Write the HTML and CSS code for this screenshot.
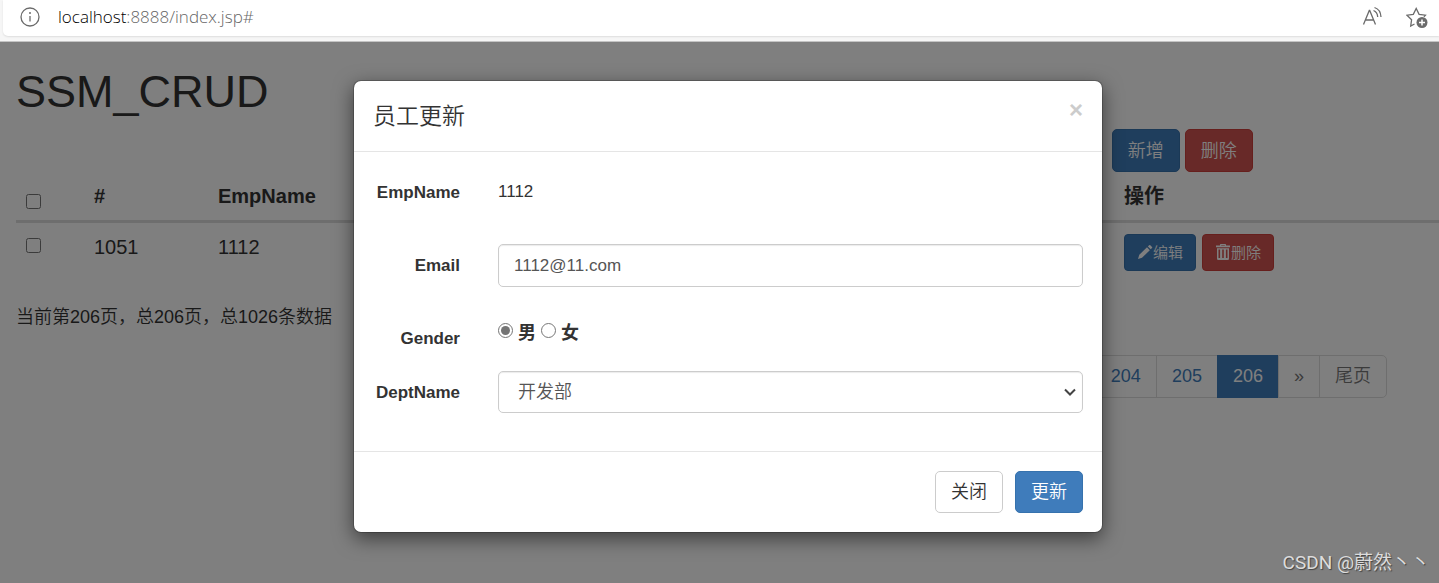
FILE: index.html
```html
<!DOCTYPE html>
<html lang="zh-CN">
<head>
  <meta charset="UTF-8">
  <title>员工列表</title>
  <link rel="stylesheet" href="styles.css">
</head>
<body>
  <header class="browser-bar">
    <div class="address">
      <svg class="icon-info" viewBox="0 0 20 20" width="20" height="20">
        <circle cx="10" cy="10" r="9" />
        <path d="M10 9v5.500" />
        <circle class="dot" cx="10" cy="6" r="1" />
      </svg>
      <span class="url"><span class="host">localhost</span>:8888/index.jsp#</span>
      <div class="tools">
        <svg viewBox="0 0 22 22" width="22" height="22">
          <path d="M1.500 18.500 7.300 4.500h.4l5.800 14M3.700 14h7.600" />
          <path d="M11.500 4.500c2.500 1 4 3.200 4.200 6.500M12.500 1.500c3.800 1.200 6.200 4.500 6.500 9.500" />
        </svg>
        <svg viewBox="0 0 22 22" width="22" height="22">
          <path d="M8.500 18 4.700 20l.9-6.300L1 9.200l6.300-.9L10.200 2.500l2.900 5.800 6.300.9-1.500 1.500" />
          <circle class="dot" cx="16" cy="16.500" r="5.500" />
          <path class="plus" d="M16 13.500v6M13 16.500h6" />
        </svg>
      </div>
    </div>
  </header>

  <div class="viewport">
    <main class="page">
      <h1>SSM_CRUD</h1>
      <div class="toolbar">
        <button type="button" class="btn btn-primary">新增</button>
        <button type="button" class="btn btn-danger">删除</button>
      </div>

      <table class="table">
        <thead>
          <tr>
            <th class="col-check"><input type="checkbox" aria-label="全选"></th>
            <th class="col-id">#</th>
            <th>EmpName</th>
            <th class="col-action">操作</th>
          </tr>
        </thead>
        <tbody>
          <tr>
            <td><input type="checkbox" aria-label="选择 1051"></td>
            <td>1051</td>
            <td>1112</td>
            <td>
              <div class="actions">
                <button type="button" class="btn btn-primary btn-sm">
                  <svg viewBox="0 0 16 18" width="16" height="18">
                    <path d="M1 15l1.300-4.200L10 3.300l2.800 2.900-7.800 7.600zM10.900 2.400l1.200-1.200q.6-.5 1.200 0l1.700 1.700q.5.600 0 1.200l-1.300 1.200z" />
                  </svg>编辑</button>
                <button type="button" class="btn btn-danger btn-sm">
                  <svg viewBox="0 0 16 18" width="16" height="18">
                    <path fill-rule="evenodd" d="M5 1.500V.7Q5 0 5.700 0h4.600q.7 0 .7.700v.8h4v1.700H1V1.500zM6.200 1.500h3.600V1.100H6.200zM2 4.200h12v10.600q0 1.200-1.200 1.200H3.200Q2 16 2 14.800zM3.500 5.500V14h1.600V5.500zM7.200 5.500V14h1.600V5.500zM10.900 5.500V14h1.600V5.500z" />
                  </svg>删除</button>
              </div>
            </td>
          </tr>
        </tbody>
      </table>

      <p class="page-info">当前第206页，总206页，总1026条数据</p>
      <nav class="pager">
        <ul class="pagination">
          <li><a href="#">204</a></li>
          <li><a href="#">205</a></li>
          <li class="active"><a href="#">206</a></li>
          <li class="disabled"><a href="#">»</a></li>
          <li class="disabled"><a href="#">尾页</a></li>
        </ul>
      </nav>
    </main>

    <div class="backdrop">
      <form class="modal" role="dialog" aria-labelledby="modalTitle">
        <div class="modal-header">
          <h4 id="modalTitle">员工更新</h4>
          <button type="button" class="close">×</button>
        </div>
        <div class="modal-body">
          <div class="form-group with-help">
            <span class="control-label">EmpName</span>
            <p class="form-static">1112</p>
          </div>
          <div class="form-group with-help">
            <label class="control-label" for="email">Email</label>
            <input type="text" class="form-control" id="email" value="1112@11.com">
          </div>
          <div class="form-group">
            <span class="control-label">Gender</span>
            <div class="radios">
              <label><input type="radio" name="gender" value="M" checked>男</label>
              <label><input type="radio" name="gender" value="F">女</label>
            </div>
          </div>
          <div class="form-group">
            <label class="control-label" for="dept">DeptName</label>
            <select class="form-control" id="dept">
              <option>开发部</option>
            </select>
          </div>
        </div>
        <div class="modal-footer">
          <button type="button" class="btn btn-default">关闭</button>
          <button type="submit" class="btn btn-primary">更新</button>
        </div>
      </form>
    </div>

    <div class="watermark">CSDN @蔚然丶丶</div>
  </div>
</body>
</html>
```
FILE: styles.css
```css
* { box-sizing: border-box; }
body {
  margin: 0;
  min-height: 100vh;
  display: flex;
  flex-direction: column;
  font-family: "Liberation Sans", "Noto Sans CJK SC", sans-serif;
  font-weight: 350;
  font-size: 18px;
  line-height: 26px;
  color: #333;
  background-color: #fff;
}
h1, h4, p, ul { margin: 0; padding: 0; font-weight: 350; }
button, input, select { font: inherit; margin: 0; }
input[type="checkbox"], input[type="radio"] {
  display: block;
  width: 15px;
  height: 15px;
  accent-color: #757575;
}

/* browser bar */
.browser-bar {
  height: 42px;
  padding-left: 3px;
  background-color: #f6f6f6;
  border-bottom: 1px solid #c4c4c4;
}
.address {
  display: flex;
  align-items: center;
  height: 36px;
  padding: 0 11px 2px 17px;
  background-color: #fff;
  border-radius: 0 0 0 5px;
  box-shadow: 0 1px 2px rgba(0,0,0,0.1);
}
.address svg { fill: none; stroke: #6b6b6b; stroke-width: 1.3; }
.address svg .dot { fill: #6b6b6b; stroke: none; }
.address svg .plus { stroke: #fff; stroke-width: 1.5; }
.url {
  margin-left: 18px;
  font-family: "Open Sans", sans-serif;
  font-size: 17px;
  font-weight: 300;
  color: #666;
}
.host { color: #000; }
.tools { display: flex; gap: 22px; margin-left: auto; }

/* page */
.viewport { position: relative; flex: 1; overflow: hidden; }
.page { padding: 25px 0 20px 16px; }
h1 { font-size: 45px; line-height: 50px; margin-bottom: 12px; }
.toolbar { display: flex; gap: 5px; margin-left: 77%; }
.btn {
  height: 43px;
  padding: 0 15px;
  border: 1px solid transparent;
  border-radius: 5px;
  white-space: nowrap;
  cursor: pointer;
}
.btn-primary { color: #fff; background-color: #3f7cbb; border-color: #3672ad; }
.btn-danger { color: #fff; background-color: #d15350; border-color: #cc3f3b; }
.btn-default { color: #333; background-color: #fff; border-color: #ccc; }
.btn-sm {
  display: flex;
  align-items: center;
  height: 37px;
  padding: 0 12px;
  border-radius: 4px;
  font-size: 15px;
}
.btn-sm svg { fill: #fff; }
.table {
  width: 100%;
  table-layout: fixed;
  border-collapse: collapse;
  font-size: 20px;
}
.table th {
  padding: 10px 10px;
  border-bottom: 3px solid #ddd;
  text-align: left;
  vertical-align: top;
  line-height: 28px;
}
.table td { padding: 11px 10px; vertical-align: top; }
.table th input { margin-top: 12px; }
.table td input { margin-top: 4px; }
.col-check { width: 68px; }
.col-id { width: 124px; }
.col-action { width: 325px; }
.actions { display: flex; gap: 6px; }
.page-info { margin-top: 22px; }
.pager { display: flex; justify-content: flex-end; margin-top: 25px; padding-right: 52px; }
.pagination { display: flex; list-style: none; }
.pagination a {
  display: block;
  height: 43px;
  padding: 0 15px;
  margin-left: -1px;
  border: 1px solid #ddd;
  line-height: 41px;
  color: #3f7cbb;
  text-decoration: none;
}
.pagination li:last-child a { border-radius: 0 5px 5px 0; }
.pagination .active a { color: #fff; background-color: #3f7cbb; border-color: #3f7cbb; }
.pagination .disabled a { color: #777; }

/* modal */
.backdrop {
  position: absolute;
  inset: 0;
  padding: 38px 0 0 17px;
  background-color: rgba(0,0,0,0.5);
}
.modal {
  max-width: 750px;
  margin: 0 auto;
  background-color: #fff;
  background-clip: padding-box;
  border: 1px solid rgba(0,0,0,0.2);
  border-radius: 8px;
  box-shadow: 0 6px 19px rgba(0,0,0,0.5);
}
.modal-header {
  display: flex;
  justify-content: space-between;
  align-items: flex-start;
  padding: 19px;
  border-bottom: 1px solid #e5e5e5;
}
.modal-header h4 { font-size: 23px; line-height: 32px; }
.close {
  padding: 0;
  border: none;
  background: none;
  color: #ccc;
  font-size: 24px;
  font-weight: bold;
  line-height: 20px;
  cursor: pointer;
}
.modal-body { padding: 19px 19px 0; }
.form-group {
  display: grid;
  grid-template-columns: 87px 1fr;
  column-gap: 38px;
  align-items: start;
  margin-bottom: 19px;
}
.form-group:last-child { margin-bottom: 38px; }
.with-help { min-height: 54px; }
.control-label {
  padding-top: 9px;
  font-size: 17px;
  font-weight: bold;
  text-align: right;
}
.form-static { padding-top: 8px; font-size: 17px; }
.form-control {
  width: 100%;
  height: 42px;
  padding: 0 15px;
  border: 1px solid #ccc;
  border-radius: 5px;
  background-color: #fff;
  color: #555;
  box-shadow: inset 0 1px 1px rgba(0,0,0,0.08);
}
input.form-control { height: 43px; font-size: 17px; }
select.form-control {
  appearance: none;
  padding-left: 19px;
  background-image: url("data:image/svg+xml,%3Csvg xmlns='http://www.w3.org/2000/svg' viewBox='0 0 12 8'%3E%3Cpath d='M1 1.500l5 5 5-5' fill='none' stroke='%23444' stroke-width='2'/%3E%3C/svg%3E");
  background-repeat: no-repeat;
  background-position: right 6px center;
  background-size: 12px 8px;
}
.radios { display: flex; gap: 5px; padding-top: 3px; font-weight: bold; }
.radios label { display: flex; gap: 5px; }
.radios input { margin-top: 3px; }
.modal-footer {
  display: flex;
  justify-content: flex-end;
  gap: 12px;
  padding: 19px;
  border-top: 1px solid #e5e5e5;
}
.modal-footer .btn { height: 42px; }

.watermark {
  position: absolute;
  right: 9px;
  bottom: 7px;
  font-family: Roboto, "Noto Sans CJK SC", sans-serif;
  font-weight: 400;
  font-size: 19px;
  color: #ddd;
  text-shadow: 1px 1px 1px #444;
}
```
